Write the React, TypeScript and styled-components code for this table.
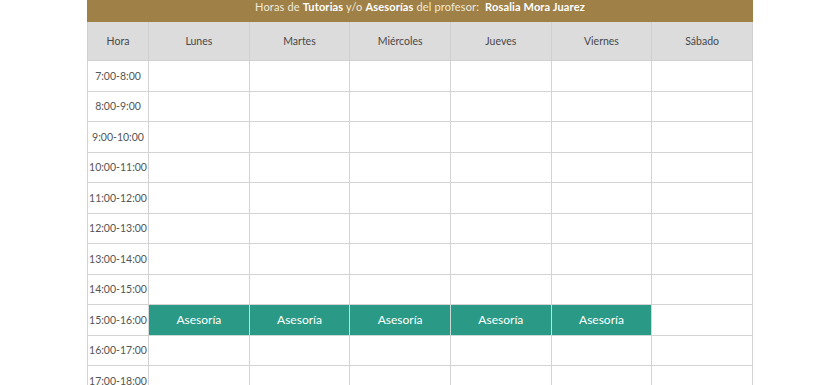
import React from "react";
import styled, { createGlobalStyle } from "styled-components";

const GlobalStyle = createGlobalStyle`
  html, body { margin: 0; padding: 0; background: #ffffff; }
  body { font-family: Lato, "Open Sans", "Liberation Sans", sans-serif; color: #444; overflow: hidden; }
`;

const Wrapper = styled.div`
  width: 666px;
  margin: 0 auto;
`;

const Banner = styled.div`
  height: 22px;
  background: #9f8147;
  color: #f1e9da;
  font-size: 11px;
  line-height: 13px;
  text-align: center;
  letter-spacing: 0.15px;
  b { color: #ffffff; font-weight: 700; }
`;

const Table = styled.table`
  width: 100%;
  border-collapse: collapse;
  table-layout: fixed;
`;

const HeadCell = styled.th<{ $narrow?: boolean }>`
  width: ${(p) => (p.$narrow ? "60px" : "auto")};
  height: 38px;
  background: #dcdcdc;
  border: 1px solid #d0d0d0;
  border-top: none;
  font-weight: 400;
  font-size: 10.5px;
  color: #484848;
  padding: 0;
`;

const TimeCell = styled.td`
  height: 29.5px;
  border: 1px solid #d4d4d4;
  font-size: 10.5px;
  color: #555;
  text-align: center;
  padding: 0;
  white-space: nowrap;
`;

const SlotCell = styled.td<{ $busy?: boolean }>`
  border: 1px solid ${(p) => (p.$busy ? "#c9dcd7" : "#d4d4d4")};
  background: ${(p) => (p.$busy ? "#2a9986" : "#ffffff")};
  color: #ffffff;
  font-size: 12px;
  text-align: center;
  padding: 0;
`;

const days = ["Lunes", "Martes", "Miércoles", "Jueves", "Viernes", "Sábado"];
const hours = [7, 8, 9, 10, 11, 12, 13, 14, 15, 16, 17];
const busy: Record<number, number[]> = { 15: [0, 1, 2, 3, 4] };

export default function App() {
  return (
    <>
      <GlobalStyle />
      <Wrapper>
        <Banner>
          Horas de <b>Tutorias</b> y/o <b>Asesorías</b> del profesor:&nbsp; <b>Rosalia Mora Juarez</b>
        </Banner>
        <Table>
          <thead>
            <tr>
              <HeadCell $narrow>Hora</HeadCell>
              {days.map((d) => (
                <HeadCell key={d}>{d}</HeadCell>
              ))}
            </tr>
          </thead>
          <tbody>
            {hours.map((h) => (
              <tr key={h}>
                <TimeCell>{`${h}:00-${h + 1}:00`}</TimeCell>
                {days.map((d, i) => {
                  const isBusy = (busy[h] || []).includes(i);
                  return (
                    <SlotCell key={d} $busy={isBusy}>
                      {isBusy ? "Asesoría" : ""}
                    </SlotCell>
                  );
                })}
              </tr>
            ))}
          </tbody>
        </Table>
      </Wrapper>
    </>
  );
}
